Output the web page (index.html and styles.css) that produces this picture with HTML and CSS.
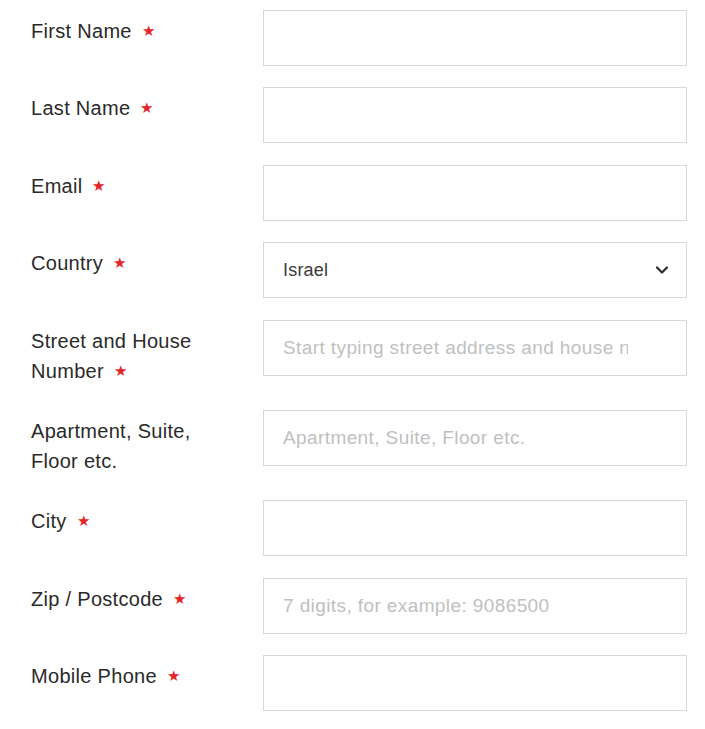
FILE: index.html
```html
<!DOCTYPE html>
<html lang="en">
<head>
    <meta charset="UTF-8">
    <meta name="viewport" content="width=device-width, initial-scale=1.0">
    <title>Shipping Address</title>
    <link rel="stylesheet" href="styles.css">
</head>
<body>
    <form class="address-form">
        <div class="form-row">
            <label class="form-label" for="firstName">First Name <span class="req">★</span></label>
            <input class="form-input" type="text" id="firstName">
        </div>
        <div class="form-row">
            <label class="form-label" for="lastName">Last Name <span class="req">★</span></label>
            <input class="form-input" type="text" id="lastName">
        </div>
        <div class="form-row">
            <label class="form-label" for="email">Email <span class="req">★</span></label>
            <input class="form-input" type="email" id="email">
        </div>
        <div class="form-row">
            <label class="form-label" for="country">Country <span class="req">★</span></label>
            <div class="select-wrap">
                <select class="form-input form-select" id="country">
                    <option>Israel</option>
                </select>
                <svg class="chevron" width="14" height="10" viewBox="0 0 14 10">
                    <path d="M2 2.5 L7 7.5 L12 2.5" fill="none" stroke="#2b2b2b" stroke-width="2.2" stroke-linecap="round" stroke-linejoin="round"/>
                </svg>
            </div>
        </div>
        <div class="form-row">
            <label class="form-label" for="street">Street and House Number <span class="req">★</span></label>
            <input class="form-input form-input-search" type="text" id="street" placeholder="Start typing street address and house number">
        </div>
        <div class="form-row">
            <label class="form-label" for="apartment">Apartment, Suite, Floor etc.</label>
            <input class="form-input" type="text" id="apartment" placeholder="Apartment, Suite, Floor etc.">
        </div>
        <div class="form-row">
            <label class="form-label" for="city">City <span class="req">★</span></label>
            <input class="form-input" type="text" id="city">
        </div>
        <div class="form-row">
            <label class="form-label" for="zip">Zip / Postcode <span class="req">★</span></label>
            <input class="form-input" type="text" id="zip" placeholder="7 digits, for example: 9086500">
        </div>
        <div class="form-row">
            <label class="form-label" for="mobile">Mobile Phone <span class="req">★</span></label>
            <input class="form-input" type="tel" id="mobile">
        </div>
    </form>
</body>
</html>
```

FILE: styles.css
```css
body {
    font-family: "Liberation Sans", Arial, sans-serif;
    margin: 0;
    padding: 0;
    background-color: #ffffff;
    color: #2a2a2a;
}

.address-form {
    padding: 10px 18px 0 31px;
    display: flex;
    flex-direction: column;
    gap: 21.4px;
}

.form-row {
    display: grid;
    grid-template-columns: 200px 1fr;
    column-gap: 32px;
    align-items: start;
}

.form-label {
    font-size: 20px;
    letter-spacing: 0.3px;
    line-height: 30px;
    padding: 6px 0 3px;
    color: #2a2a2a;
}

.form-label .req {
    color: #e3262b;
    font-size: 15px;
    line-height: 1;
    letter-spacing: 0;
    vertical-align: 2px;
    margin-left: 4px;
}

.form-input {
    box-sizing: border-box;
    width: 100%;
    height: 56px;
    margin: 0;
    padding: 0 19px;
    border: 1px solid #d8d8d8;
    border-radius: 0;
    background-color: #ffffff;
    font-family: "Liberation Sans", Arial, sans-serif;
    font-size: 19px;
    letter-spacing: 0.4px;
    color: #333333;
    outline: none;
}

.form-input-search {
    padding-right: 58px;
}

.form-input::placeholder {
    color: #c0c0c0;
}

.select-wrap {
    position: relative;
}

.form-select {
    appearance: none;
    -webkit-appearance: none;
    font-size: 18px;
    letter-spacing: 0.2px;
    color: #3a3a3a;
}

.select-wrap .chevron {
    position: absolute;
    right: 18px;
    top: 23px;
    pointer-events: none;
}
```
